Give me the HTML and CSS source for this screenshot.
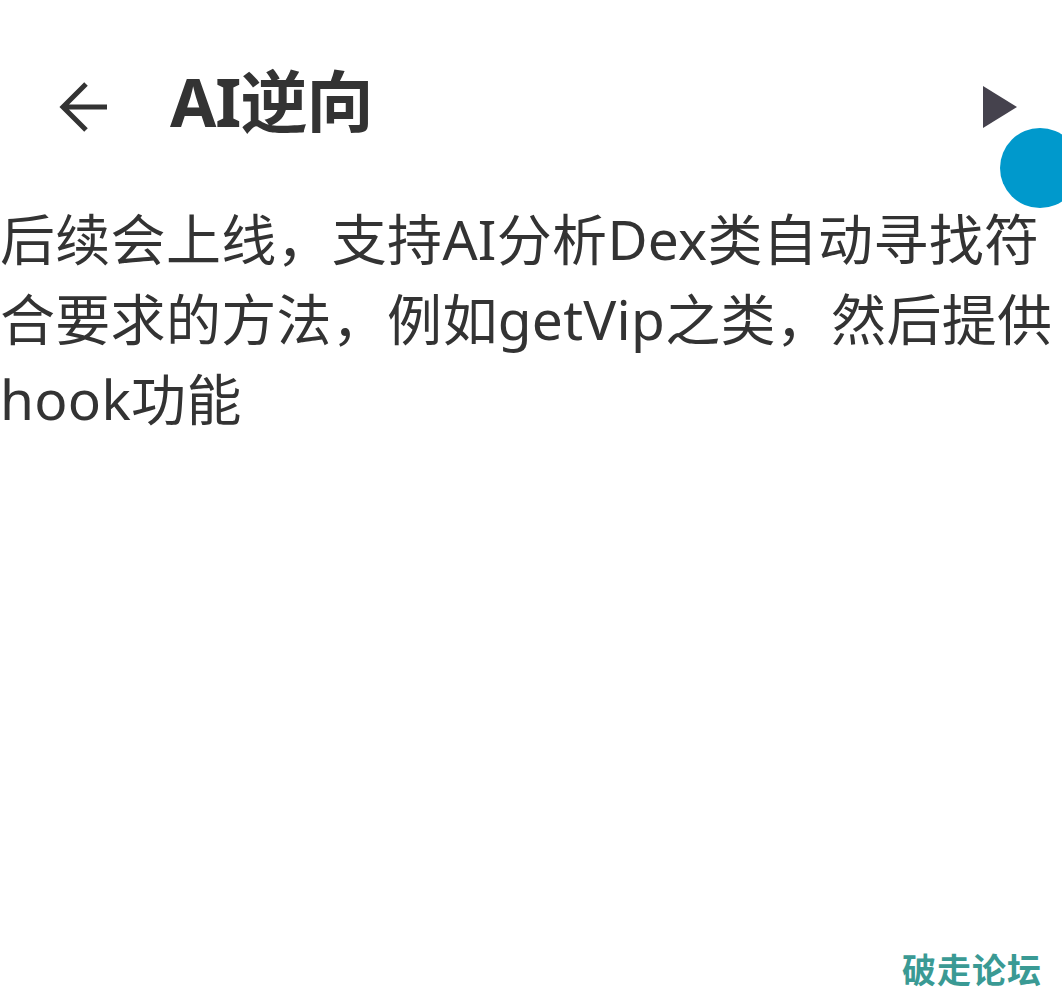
FILE: index.html
```html
<!DOCTYPE html>
<html lang="zh-CN">
<head>
    <meta charset="UTF-8">
    <meta name="viewport" content="width=device-width, initial-scale=1.0">
    <title>AI逆向</title>
    <link rel="stylesheet" href="styles.css">
</head>
<body>
    <header class="toolbar">
        <a href="#" class="back">
            <svg width="50" height="50" viewBox="0 0 50 50">
                <path d="M49 25H5M28 2L5 25l23 23" fill="none" stroke="#333" stroke-width="5"/>
            </svg>
        </a>
        <h1 class="title">AI逆向</h1>
        <span class="play">
            <svg width="34" height="42" viewBox="0 0 34 42">
                <path d="M0 0L34 21L0 42Z" fill="#45424d"/>
            </svg>
        </span>
    </header>

    <span class="dot"></span>

    <p class="desc">后续会上线，支持AI分析Dex类自动寻找符合要求的方法，例如getVip之类，然后提供hook功能</p>

    <div class="mark">破走论坛</div>
</body>
</html>
```

FILE: styles.css
```css
body {
    margin: 0;
    padding: 0;
    background: #ffffff;
    color: #333333;
    font-family: "Noto Sans", "Noto Sans CJK SC", sans-serif;
    height: 997px;
    overflow: hidden;
    position: relative;
}

.toolbar {
    display: flex;
    align-items: center;
    height: 100px;
    padding: 57px 45px 0 58px;
}

.back {
    display: flex;
    width: 50px;
}

.title {
    margin: 0 0 0 62px;
    font-size: 67px;
    font-weight: bold;
    color: #333333;
    flex: 1;
    letter-spacing: -1px;
    line-height: 100px;
    position: relative;
    top: -6px;
}

.play {
    display: flex;
}

.dot {
    position: absolute;
    left: 1000px;
    top: 128px;
    width: 80px;
    height: 80px;
    border-radius: 50%;
    background: #0099cc;
}

.desc {
    margin: 42px 0 0 0;
    font-size: 55px;
    line-height: 80px;
    letter-spacing: 0.3px;
}

.mark {
    position: absolute;
    right: 20px;
    bottom: 4px;
    font-size: 34px;
    font-weight: bold;
    color: #3a9a94;
    letter-spacing: 1px;
}
```
